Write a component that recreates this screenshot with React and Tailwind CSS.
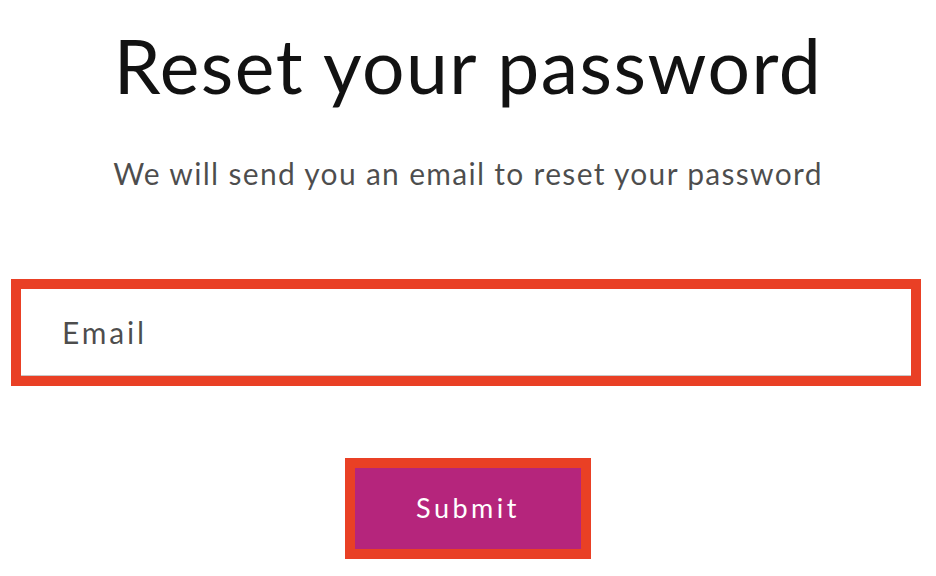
import React from "react";

const font = { fontFamily: '"Lato", "Noto Sans", sans-serif' };

export default function App() {
  return (
    <div
      className="w-[936px] h-[576px] bg-white flex flex-col items-center overflow-hidden"
      style={font}
    >
      {/* Heading */}
      <h1 className="mt-[20px] text-[75px] leading-[90px] text-[#121212] tracking-[1.5px]">
        Reset your password
      </h1>

      <p className="mt-[43px] text-[30px] leading-[40px] text-[#121212]/75 tracking-[1.3px]">
        We will send you an email to reset your password
      </p>

      {/* Email field */}
      <div className="mt-[86px] self-start ml-[11px] w-[910px]">
        <div className="border-[10px] border-[#e94025] bg-white">
          <div className="h-[87px] flex items-center pl-[41px] border-b border-[#c8c8c8]">
            <span className="text-[30px] tracking-[2.8px] text-[#121212]/75">Email</span>
          </div>
        </div>
      </div>

      {/* Submit */}
      <button className="mt-[72px] border-[10px] border-[#e94025]">
        <span className="w-[226px] h-[81px] flex items-center justify-center bg-[#b5257c] text-white text-[27px] tracking-[3.5px]">
          Submit
        </span>
      </button>
    </div>
  );
}
